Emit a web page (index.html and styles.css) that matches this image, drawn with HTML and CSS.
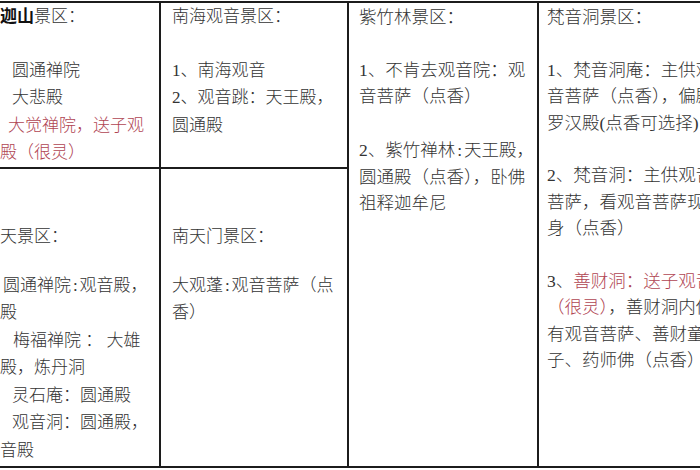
FILE: index.html
```html
<!DOCTYPE html>
<html lang="zh-CN">
<head>
<meta charset="utf-8">
<title>景区</title>
<link rel="stylesheet" href="styles.css">
</head>
<body>
<div class="table">
  <div class="cell c1 r1">
    <p class="ln"><b class="strong">迦山</b>景区：</p>
    <div class="gap"></div>
    <p class="ln in-12">圆通禅院</p>
    <p class="ln in-12">大悲殿</p>
    <p class="ln in-8 red">大觉禅院，送子观</p>
    <p class="ln red">殿（很灵）</p>
  </div>
  <div class="cell c2 r1">
    <p class="ln">南海观音景区：</p>
    <div class="gap"></div>
    <p class="ln">1、南海观音</p>
    <p class="ln">2、观音跳：天王殿，</p>
    <p class="ln">圆通殿</p>
  </div>
  <div class="cell c3 span">
    <p class="ln">紫竹林景区：</p>
    <div class="gap"></div>
    <p class="ln">1、不肯去观音院：观</p>
    <p class="ln">音菩萨（点香）</p>
    <div class="gap-wide"></div>
    <p class="ln">2、紫竹禅林<span class="hc">:</span>天王殿，</p>
    <p class="ln">圆通殿（点香），卧佛</p>
    <p class="ln">祖释迦牟尼</p>
  </div>
  <div class="cell c4 span">
    <p class="ln">梵音洞景区：</p>
    <div class="gap"></div>
    <p class="ln">1、梵音洞庵：主供观音</p>
    <p class="ln">音菩萨（点香），偏殿</p>
    <p class="ln">罗汉殿(点香可选择)</p>
    <div class="gap"></div>
    <p class="ln">2、梵音洞：主供观音</p>
    <p class="ln">菩萨，看观音菩萨现</p>
    <p class="ln">身（点香）</p>
    <div class="gap"></div>
    <p class="ln">3、<span class="red">善财洞：送子观音</span></p>
    <p class="ln"><span class="red">（很灵）</span>，善财洞内供</p>
    <p class="ln">有观音菩萨、善财童</p>
    <p class="ln">子、药师佛（点香）</p>
  </div>
  <div class="cell c1 r2">
    <p class="ln">天景区：</p>
    <div class="gap-short"></div>
    <p class="ln in-3">圆通禅院<span class="hc">:</span>观音殿，</p>
    <p class="ln">殿</p>
    <p class="ln in-13">梅福禅院 ： 大雄</p>
    <p class="ln">殿，炼丹洞</p>
    <p class="ln in-12">灵石庵：圆通殿</p>
    <p class="ln in-12">观音洞：圆通殿，</p>
    <p class="ln">音殿</p>
  </div>
  <div class="cell c2 r2">
    <p class="ln">南天门景区：</p>
    <div class="gap-short"></div>
    <p class="ln">大观蓬<span class="hc">:</span>观音菩萨（点</p>
    <p class="ln">香）</p>
  </div>
</div>
</body>
</html>
```

FILE: styles.css
```css
html, body {
  margin: 0;
  padding: 0;
  background: #ffffff;
  overflow: hidden;
}

body {
  width: 700px;
  height: 470px;
  font-family: "Liberation Serif", "Noto Sans CJK SC", serif;
  font-weight: 300;
  color: #333333;
}

.table {
  display: grid;
  grid-template-columns: 159px 188px 190px 1fr;
  grid-template-rows: 164px 299px;
  width: 700px;
  margin-top: 1px;
  border-top: 2px solid #1c1c1c;
  border-bottom: 2px solid #1c1c1c;
}

.cell {
  overflow: hidden;
  min-width: 0;
}

.c1 {
  grid-column: 1;
  font-size: 17px;
  line-height: 27.5px;
}

.c2 {
  grid-column: 2;
  border-left: 2px solid #1c1c1c;
  padding-left: 11px;
  font-size: 17px;
  line-height: 27.5px;
}

.c3 {
  grid-column: 3;
  border-left: 2px solid #1c1c1c;
  padding-left: 10px;
}

.c4 {
  grid-column: 4;
  border-left: 2px solid #1c1c1c;
  padding-left: 8px;
}

.span {
  grid-row: 1 / 3;
  font-size: 17.5px;
  line-height: 26.5px;
  padding-top: 1px;
}

.r1 {
  grid-row: 1;
}

.r2 {
  grid-row: 2;
  border-top: 2px solid #1c1c1c;
  padding-top: 54px;
}

.ln {
  margin: 0;
  white-space: nowrap;
}

.hc {
  display: inline-block;
  width: 0.5em;
  text-align: center;
}

.gap {
  height: 26px;
}

.gap-wide {
  height: 27.5px;
}

.gap-short {
  height: 21px;
}

.in-3 { padding-left: 3px; }
.in-8 { padding-left: 8px; }
.in-12 { padding-left: 12px; }
.in-13 { padding-left: 13px; }

.strong {
  font-weight: bold;
  color: #111111;
}

.red {
  color: #b04452;
}
```
